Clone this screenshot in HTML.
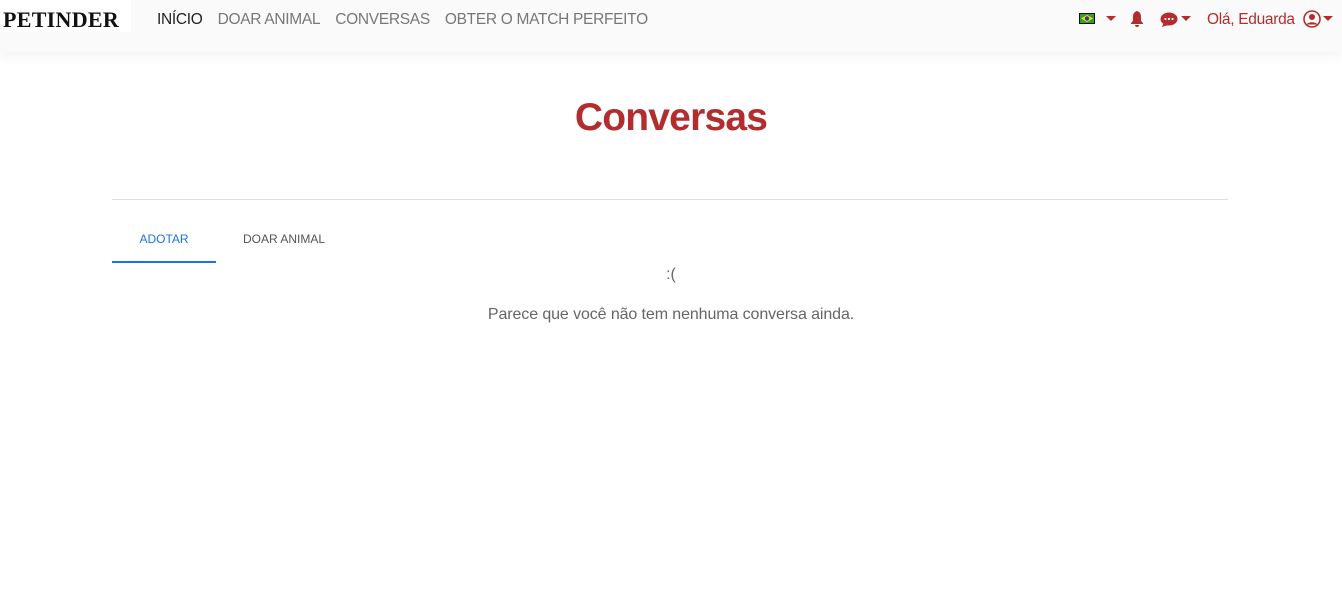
<!DOCTYPE html>
<html><head><meta charset="utf-8"><style>
body{margin:0;width:1342px;height:589px;background:#fff;font-family:"Liberation Sans",sans-serif;position:relative;overflow:hidden}
.nav{position:absolute;left:0;top:0;width:1342px;height:52px;background:#fafafa;box-shadow:0 4px 12px rgba(0,0,0,.05)}
.logo{position:absolute;left:0;top:0;width:128px;height:32px;background:#fff;font-family:"Liberation Serif",serif;font-weight:bold;font-size:22px;color:#111;line-height:40px;padding-left:3px;letter-spacing:.3px}
.links{position:absolute;left:157px;top:11px;font-size:15.5px;letter-spacing:-0.3px;color:#777;white-space:nowrap}
.links span{margin-right:15px}
.r{position:absolute;top:11px;font-size:15.5px;letter-spacing:-0.3px;color:#b22e2e}
.c{position:absolute;width:100%;text-align:center}
</style></head><body>
<div class="nav">
<div class="logo">PETINDER</div>
<div class="links"><span style="color:#222">INÍCIO</span><span>DOAR ANIMAL</span><span>CONVERSAS</span><span>OBTER O MATCH PERFEITO</span></div>
<svg style="position:absolute;left:1079px;top:13px" width="16" height="11"><rect width="16" height="11" fill="#111"/><rect x="1" y="1" width="14" height="9" fill="#3a9a2a"/><polygon points="8,2 14,5.5 8,9 2,5.5" fill="#f0e020"/><circle cx="8" cy="5.5" r="2.2" fill="#2a3a9a"/></svg>
<svg style="position:absolute;left:1106px;top:16px" width="10" height="6"><polygon points="0,0 10,0 5,5" fill="#b22e2e"/></svg>
<svg style="position:absolute;left:1130px;top:11px" width="14" height="16"><path d="M7 0C4 1 3 3 3 6v4L1 12v1h12v-1l-2-2V6c0-3-1-5-4-6zM5 14h4a2 2 0 0 1-4 0z" fill="#b22e2e"/></svg>
<svg style="position:absolute;left:1160px;top:12px" width="18" height="16"><ellipse cx="9" cy="7" rx="8.5" ry="6.5" fill="#b22e2e"/><path d="M2 15l2-5 4 3z" fill="#b22e2e"/><circle cx="5.5" cy="7" r="1.1" fill="#fff"/><circle cx="9" cy="7" r="1.1" fill="#fff"/><circle cx="12.5" cy="7" r="1.1" fill="#fff"/></svg>
<svg style="position:absolute;left:1181px;top:16px" width="10" height="6"><polygon points="0,0 10,0 5,5" fill="#b22e2e"/></svg>
<div class="r" style="left:1207px">Olá, Eduarda</div>
<svg style="position:absolute;left:1303px;top:10px" width="18" height="18"><circle cx="9" cy="9" r="8" fill="none" stroke="#b22e2e" stroke-width="1.6"/><circle cx="9" cy="7" r="3" fill="#b22e2e"/><path d="M3.5 14.5c2-3 9-3 11 0" fill="#b22e2e"/></svg>
<svg style="position:absolute;left:1323px;top:16px" width="10" height="6"><polygon points="0,0 10,0 5,5" fill="#b22e2e"/></svg>
</div>
<div class="c" style="top:96px;font-size:39px;font-weight:bold;letter-spacing:-0.8px;color:#b22e2e">Conversas</div>
<div style="position:absolute;left:112px;top:199px;width:1116px;height:1px;background:#ddd"></div>
<div style="position:absolute;left:112px;top:232px;width:104px;text-align:center;font-size:12px;color:#1a73e8">ADOTAR</div>
<div style="position:absolute;left:112px;top:261px;width:104px;height:2px;background:#1a73e8"></div>
<div style="position:absolute;left:232px;top:232px;width:104px;text-align:center;font-size:12px;color:#555">DOAR ANIMAL</div>
<div class="c" style="top:266px;font-size:16px;color:#666">:(</div>
<div class="c" style="top:306px;font-size:16px;letter-spacing:-0.1px;color:#666">Parece que você não tem nenhuma conversa ainda.</div>
</body></html>
